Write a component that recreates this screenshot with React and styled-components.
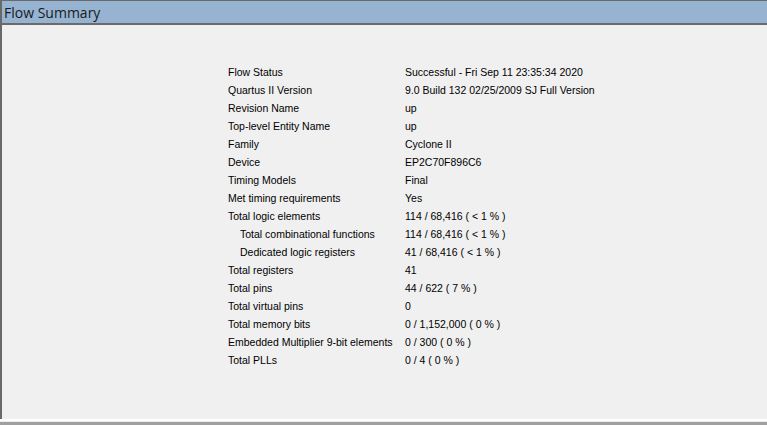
import React from 'react';
import styled, { createGlobalStyle } from 'styled-components';

const GlobalStyle = createGlobalStyle`
    html, body {
        margin: 0;
        padding: 0;
        background: #f0f0f0;
        overflow: hidden;
    }
`;

const Window = styled.div`
    width: 767px;
    height: 425px;
    display: flex;
    flex-direction: column;
    background: #f0f0f0;
`;

const Panel = styled.div`
    flex: 1;
    display: flex;
    flex-direction: column;
    border-left: 2px solid #696969;
    border-top: 1px solid #6a6a6a;
`;

const Header = styled.div`
    height: 22px;
    background: #96b3d2;
    border-bottom: 2px solid #6b6b6b;
    font-family: "Open Sans", "Noto Sans", sans-serif;
    font-size: 14px;
    line-height: 23px;
    color: #1a1a1a;
    padding-left: 2px;
    white-space: nowrap;
`;

const Body = styled.div`
    flex: 1;
    padding: 38px 0 0 226px;
`;

const Table = styled.div`
    display: grid;
    grid-template-columns: 177px auto;
    grid-auto-rows: 18px;
    font-family: "Liberation Sans", Arial, sans-serif;
    font-size: 10.5px;
    line-height: 18px;
    color: #000;
`;

const Label = styled.div`
    padding-left: ${props => (props.indent ? 12 : 0)}px;
    white-space: nowrap;
`;

const Value = styled.div`
    white-space: nowrap;
`;

const Footer = styled.div`
    height: 6px;
    box-sizing: border-box;
    border-top: 2px solid #ffffff;
    border-bottom: 3px solid #a0a0a0;
    background: #ececec;
`;

const rows = [
    ['Flow Status', 'Successful - Fri Sep 11 23:35:34 2020'],
    ['Quartus II Version', '9.0 Build 132 02/25/2009 SJ Full Version'],
    ['Revision Name', 'up'],
    ['Top-level Entity Name', 'up'],
    ['Family', 'Cyclone II'],
    ['Device', 'EP2C70F896C6'],
    ['Timing Models', 'Final'],
    ['Met timing requirements', 'Yes'],
    ['Total logic elements', '114 / 68,416 ( < 1 % )'],
    ['Total combinational functions', '114 / 68,416 ( < 1 % )', true],
    ['Dedicated logic registers', '41 / 68,416 ( < 1 % )', true],
    ['Total registers', '41'],
    ['Total pins', '44 / 622 ( 7 % )'],
    ['Total virtual pins', '0'],
    ['Total memory bits', '0 / 1,152,000 ( 0 % )'],
    ['Embedded Multiplier 9-bit elements', '0 / 300 ( 0 % )'],
    ['Total PLLs', '0 / 4 ( 0 % )'],
];

const App = () => (
    <Window>
        <GlobalStyle />
        <Panel>
            <Header>Flow Summary</Header>
            <Body>
                <Table>
                    {rows.map(([label, value, indent]) => (
                        <React.Fragment key={label}>
                            <Label indent={indent}>{label}</Label>
                            <Value>{value}</Value>
                        </React.Fragment>
                    ))}
                </Table>
            </Body>
        </Panel>
        <Footer />
    </Window>
);

export default App;
